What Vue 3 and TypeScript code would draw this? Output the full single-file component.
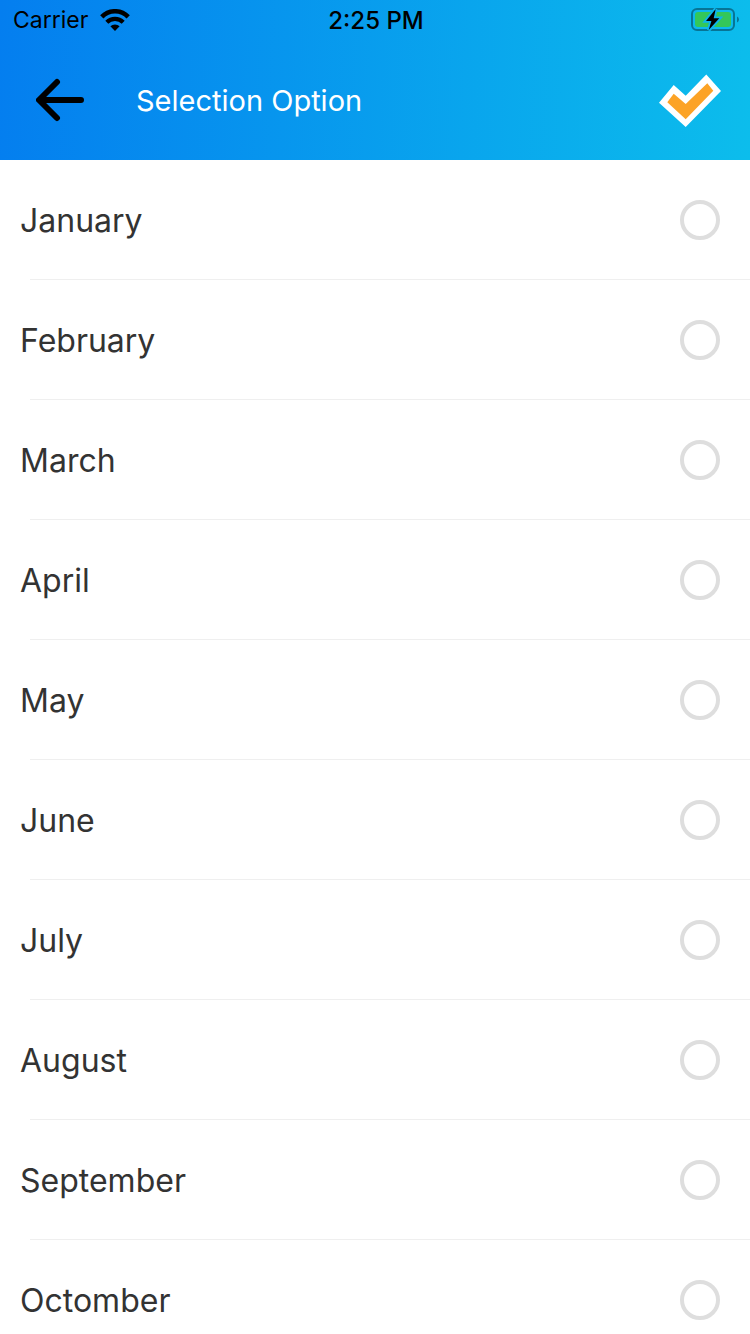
<script setup lang="ts">
import { ref } from 'vue'

const months: string[] = [
  'January',
  'February',
  'March',
  'April',
  'May',
  'June',
  'July',
  'August',
  'September',
  'Octomber',
]

const selected = ref<string[]>([])
</script>

<template>
  <div class="screen">
    <header class="top">
      <div class="status">
        <div class="carrier">
          <span>Carrier</span>
          <svg class="wifi" viewBox="0 0 30 22" aria-hidden="true">
            <path d="M1.8 7.8A18.5 18.5 0 0 1 28.2 7.8" fill="none" stroke="#000" stroke-width="4.6" />
            <path d="M6.8 13.2A11.6 11.6 0 0 1 23.2 13.2" fill="none" stroke="#000" stroke-width="4.2" />
            <path d="M15 22L10.4 17.3A6.5 6.5 0 0 1 19.6 17.3Z" />
          </svg>
        </div>
        <time class="clock">2:25 PM</time>
        <svg class="battery" viewBox="0 0 48 24" aria-hidden="true">
          <rect x="1" y="1" width="42" height="21" rx="5" fill="none" stroke="#077495" stroke-width="2" />
          <rect x="4" y="4" width="36" height="15" rx="3" fill="#34c759" />
          <path d="M46 8.5Q48 9.5 48 11.5T46 14.5Z" fill="#077495" />
          <path d="M24.7 1L15 13H20.4L17.7 22L28.3 10.3H22.7Z" fill="#000" stroke="#0cb5ec" stroke-width="3.6" paint-order="stroke" />
        </svg>
      </div>
      <div class="bar">
        <button class="icon-button" type="button" aria-label="Back">
          <svg class="arrow" viewBox="0 0 48 44" aria-hidden="true">
            <path d="M21 4L3 22L21 40M4 22H45" fill="none" stroke="#000" stroke-width="6" stroke-linecap="round" stroke-linejoin="round" />
          </svg>
        </button>
        <h1 class="title">Selection Option</h1>
        <button class="icon-button" type="button" aria-label="Done">
          <svg class="check" viewBox="0 -2 62 56" aria-hidden="true">
            <path d="M0 28.7L14.7 11L26.7 21.7L47.3 .5L62 17L26.7 53Z" fill="#fff" />
            <path d="M8.3 28.3L14.7 19.7L26.7 30L48.3 9.3L54.3 16.7L26.7 45.3Z" fill="#fca326" />
          </svg>
        </button>
      </div>
    </header>
    <main class="list">
      <label v-for="month in months" :key="month" class="row">
        <span>{{ month }}</span>
        <input v-model="selected" class="tick" type="checkbox" :value="month" />
      </label>
    </main>
  </div>
</template>

<style>
body {
  margin: 0;
}
</style>

<style scoped>
.screen {
  display: flex;
  flex-direction: column;
  height: 100vh;
  background: #fff;
  font-family: Inter, "Liberation Sans", sans-serif;
}

.top {
  flex: none;
  background: linear-gradient(93deg, #047eef, #0cbdec);
}

.status {
  display: grid;
  grid-template-columns: 1fr auto 1fr;
  align-items: center;
  height: 40px;
  padding: 0 11px 0 13px;
  font-size: 23px;
  color: #000;
}

.carrier {
  display: flex;
  align-items: center;
  gap: 12px;
}

.wifi {
  width: 30px;
  height: 22px;
}

.clock {
  font-size: 24px;
  font-weight: 500;
}

.battery {
  justify-self: end;
  width: 48px;
  height: 24px;
}

.bar {
  display: flex;
  align-items: center;
  height: 120px;
  padding: 0 29px 0 36px;
}

.icon-button {
  display: flex;
  padding: 0;
  border: 0;
  background: none;
  cursor: pointer;
}

.arrow {
  width: 48px;
  height: 44px;
}

.check {
  width: 62px;
  height: 56px;
}

.title {
  flex: 1;
  margin: 0 0 0 52px;
  font-size: 29px;
  font-weight: 400;
  color: #fff;
}

.list {
  flex: 1;
  min-height: 0;
  overflow-y: auto;
  scrollbar-width: none;
}

.row {
  display: flex;
  align-items: center;
  justify-content: space-between;
  height: 120px;
  padding: 0 30px 0 20px;
  background: linear-gradient(#efefef, #efefef) 30px 100% / 100% 1px no-repeat;
  font-size: 32px;
  color: #333;
}

.tick {
  appearance: none;
  box-sizing: border-box;
  width: 40px;
  height: 40px;
  margin: 0;
  border: 4px solid #dedede;
  border-radius: 50%;
}

.tick:checked {
  border-color: #fca326;
  background: #fca326;
}
</style>
